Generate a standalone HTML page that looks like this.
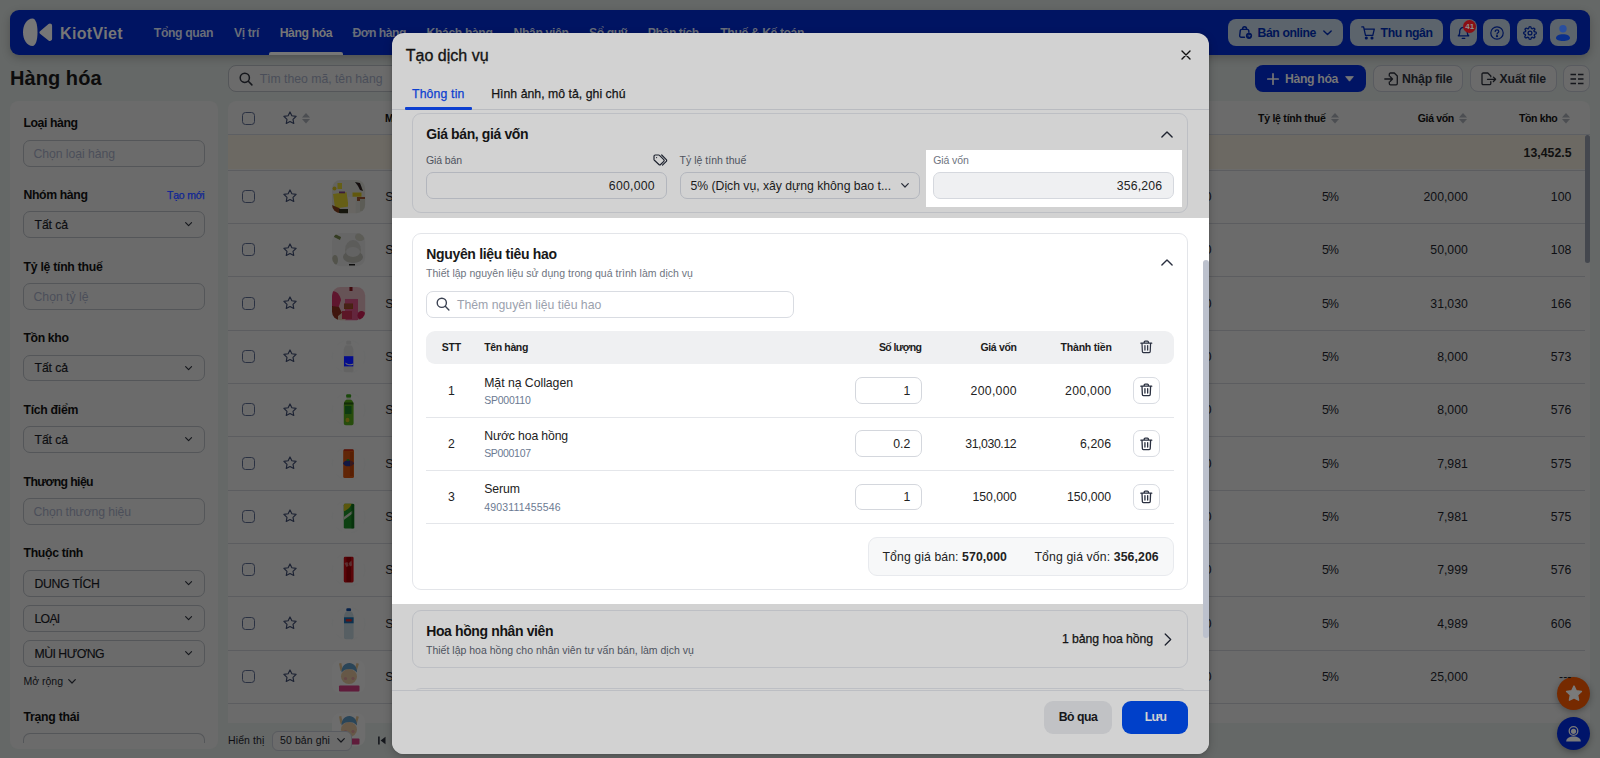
<!DOCTYPE html>
<html lang="vi">
<head>
<meta charset="utf-8">
<title>Hàng hóa - KiotViet</title>
<style>
*{box-sizing:border-box;margin:0;padding:0}
html,body{width:1600px;height:758px;overflow:hidden}
body{background:#656867;font-family:"Liberation Sans",sans-serif;position:relative}
.a{position:absolute}
.t{position:absolute;white-space:nowrap;display:block}
svg{position:absolute;overflow:visible}
/* dimmed page */
.nav{left:10px;top:10px;width:1580px;height:44.6px;background:#001462;border-radius:9px;box-shadow:0 3px 8px rgba(0,0,0,.22)}
.nb{top:19px;height:27px;border-radius:8px;background:#5c646c}
.side{left:10px;top:101.3px;width:208px;height:647.7px;background:#6b6b6b;border-radius:8px}
.inp{left:23px;width:181.5px;height:26.5px;border:1px solid #545659;border-radius:7px}
.tbl{left:228px;top:101.3px;width:1362px;height:621.7px;background:#6b6b6b;border-radius:8px 8px 0 0;overflow:hidden}
.sep{left:228px;width:1357px;height:1px;background:#5c5d60}
.cb{left:241.8px;width:13px;height:13px;border:1.3px solid #2a3142;border-radius:3.5px}
.btn2{top:65px;height:26.5px;border:1px solid #595b60;border-radius:8px;background:#6b6b6b}
/* modal */
.modal{left:391.5px;top:33px;width:817px;height:720.7px;background:#d2d2d2;border-radius:12px;box-shadow:0 3px 10px rgba(0,0,0,.2),0 0 3px rgba(0,0,0,.12);overflow:hidden}
.card{border:1px solid #bdbfc4;border-radius:9px}
.fld{height:26.5px;border:1px solid #b3b6bd;border-radius:7px}
</style>
</head>
<body>
<svg width="0" height="0" style="left:0;top:0"><defs><filter id="bl" x="-10%" y="-10%" width="120%" height="120%"><feGaussianBlur stdDeviation=".55"/></filter></defs></svg>
<div class="a nav"></div>
<svg style="left:22px;top:17px" width="32" height="31" viewBox="0 0 32 31"><path d="M10.500 1.600C4.700 1.600 1 8.200 1 15.300S4.700 29 10.500 29c3.400 0 5-6.300 5-13.700S13.900 1.600 10.500 1.600Z" fill="#767676"/><path d="M18 14.300l8.500-7.200c1.500-1.200 3.600-.2 3.600 1.700v13c0 1.900-2.100 2.900-3.600 1.700L18 16.700c-.8-.7-.8-1.800 0-2.400Z" fill="#767676"/></svg>
<div class="a" style="left:269px;top:52px;width:74px;height:2.6px;background:#767676;border-radius:2px 2px 0 0"></div>
<div class="a nb" style="left:1228px;width:115.4px"></div>
<div class="a nb" style="left:1350px;width:93px"></div>
<div class="a nb" style="left:1450px;width:26.5px"></div>
<div class="a nb" style="left:1483px;width:26.5px"></div>
<div class="a nb" style="left:1516.5px;width:26.5px"></div>
<div class="a nb" style="left:1550px;width:26.5px"></div>
<svg style="left:1238px;top:25px" width="15" height="15" viewBox="0 0 15 15" fill="none" stroke="#001556" stroke-width="1.4" stroke-linecap="round" stroke-linejoin="round"><path d="M6.5 12.300H3.200c-.9 0-1.600-.8-1.500-1.700l.6-5.200c.1-.6.600-1 1.200-1h6c.6 0 1.100.4 1.200 1l.2 1.800"/><path d="M4.600 4.300c0-1.500.9-2.600 2-2.600s2 1.100 2 2.600"/><circle cx="11" cy="10.800" r="3.100" fill="#001556" stroke="none"/><path d="M10 10.800h2M11.300 10l.8.800-.8.800" stroke="#5c646c" stroke-width=".7"/></svg>
<svg style="left:1323px;top:29.5px" width="9" height="6" viewBox="0 0 9 6" fill="none" stroke="#001556" stroke-width="1.4" stroke-linecap="round" stroke-linejoin="round"><path d="M.8 .9l3.700 3.700L8.200 .9"/></svg>
<svg style="left:1361px;top:25.5px" width="15" height="14" viewBox="0 0 15 14" fill="none" stroke="#001556" stroke-width="1.3" stroke-linecap="round" stroke-linejoin="round"><path d="M.8 .9h1.800l1.900 8.400h7.300l1.500-6.200H3.300"/><circle cx="5.300" cy="12" r=".9" fill="#001556"/><circle cx="11" cy="12" r=".9" fill="#001556"/></svg>
<svg style="left:1457px;top:26px" width="13" height="14" viewBox="0 0 13 14" fill="none" stroke="#001556" stroke-width="1.3" stroke-linecap="round" stroke-linejoin="round"><path d="M1.300 9.800c1-.9 1.400-2 1.400-3.400V5.200a3.800 3.800 0 0 1 7.600 0v1.200c0 1.400.4 2.500 1.400 3.400Z"/><path d="M5.300 12.400h2.400"/></svg>
<div class="a" style="left:1463.2px;top:20.300px;width:13.200px;height:13.200px;border-radius:7px;background:#8a0f14"></div>
<svg style="left:1489.5px;top:26px" width="14" height="14" viewBox="0 0 14 14" fill="none" stroke="#001556" stroke-width="1.2" stroke-linecap="round"><circle cx="7" cy="7" r="6.200"/><path d="M5.200 5.500c0-1 .8-1.700 1.800-1.700s1.800.7 1.800 1.600c0 1.300-1.800 1.400-1.800 2.700"/><circle cx="7" cy="10.200" r=".5" fill="#001556"/></svg>
<svg style="left:1523px;top:25.800px" width="14" height="14" viewBox="0 0 24 24" fill="none" stroke="#001556" stroke-width="2.200" stroke-linecap="round" stroke-linejoin="round"><circle cx="12" cy="12" r="3.300"/><path d="M19.400 15a1.650 1.650 0 0 0 .33 1.820l.06.060a2 2 0 1 1-2.830 2.830l-.06-.06a1.650 1.650 0 0 0-1.820-.33 1.650 1.650 0 0 0-1 1.510V21a2 2 0 0 1-4 0v-.09A1.650 1.650 0 0 0 9 19.400a1.650 1.650 0 0 0-1.820.33l-.6.060a2 2 0 1 1-2.830-2.830l.06-.06a1.650 1.650 0 0 0 .33-1.820 1.650 1.650 0 0 0-1.510-1H3a2 2 0 0 1 0-4h.09A1.650 1.650 0 0 0 4.600 9a1.650 1.650 0 0 0-.33-1.820l-.06-.06a2 2 0 1 1 2.830-2.830l.6.060a1.650 1.650 0 0 0 1.820.33H9a1.650 1.650 0 0 0 1-1.510V3a2 2 0 0 1 4 0v.09a1.650 1.650 0 0 0 1 1.510 1.650 1.650 0 0 0 1.820-.33l.06-.06a2 2 0 1 1 2.830 2.830l-.6.060a1.650 1.650 0 0 0-.33 1.820V9a1.650 1.650 0 0 0 1.510 1H21a2 2 0 0 1 0 4h-.09a1.650 1.650 0 0 0-1.510 1z"/></svg>
<svg style="left:1555px;top:23.500px" width="16" height="18" viewBox="0 0 16 18"><circle cx="8" cy="4.800" r="3.700" fill="#2a4f9f"/><path d="M1 14.300c0-2.600 3.100-4 7-4s7 1.400 7 4c0 1.600-3.100 2.700-7 2.700s-7-1.100-7-2.700Z" fill="#0a2f8c"/></svg>
<div class="a" style="left:228px;top:65px;width:400px;height:27px;border:1px solid #545659;border-radius:8px;background:#6b6b6b"></div>
<svg style="left:239px;top:71.500px" width="14" height="14" viewBox="0 0 14 14" fill="none" stroke="#15171c" stroke-width="1.500" stroke-linecap="round"><circle cx="5.800" cy="5.800" r="4.600"/><path d="M9.300 9.300l3.600 3.600"/></svg>
<div class="a" style="left:1255px;top:65px;width:110.500px;height:26.500px;border-radius:8px;background:#001464"></div>
<svg style="left:1267px;top:72.500px" width="12" height="12" viewBox="0 0 12 12" stroke="#767676" stroke-width="1.700" stroke-linecap="round"><path d="M6 .8v10.400M.8 6h10.400"/></svg>
<svg style="left:1345px;top:75.500px" width="9" height="6" viewBox="0 0 9 6"><path d="M.6 .6h7.800L4.500 5.200Z" fill="#767676" stroke="#767676" stroke-width=".8" stroke-linejoin="round"/></svg>
<div class="a btn2" style="left:1372.8px;width:90px"></div>
<div class="a btn2" style="left:1470px;width:86.8px"></div>
<div class="a btn2" style="left:1563.4px;width:26.6px"></div>
<svg style="left:1383.500px;top:71.500px" width="15" height="14" viewBox="0 0 15 14" fill="none" stroke="#14161b" stroke-width="1.300" stroke-linecap="round" stroke-linejoin="round"><path d="M5.300 4V2.200c0-.7.500-1.200 1.200-1.200h3.800l3 3v7.600c0 .7-.5 1.200-1.200 1.200H6.500c-.7 0-1.200-.5-1.200-1.200V10"/><path d="M.8 7h7.600M6.300 4.800L8.500 7 6.300 9.200"/></svg>
<svg style="left:1480.500px;top:71.500px" width="16" height="14" viewBox="0 0 16 14" fill="none" stroke="#14161b" stroke-width="1.300" stroke-linecap="round" stroke-linejoin="round"><path d="M9.800 9.600v1.800c0 .7-.5 1.200-1.200 1.200H2.200c-.7 0-1.200-.5-1.200-1.200V2.200C1 1.500 1.500 1 2.200 1h4.600l3 3v.8"/><path d="M6.500 7.300h8M12.400 5.100l2.200 2.200-2.200 2.200"/></svg>
<svg style="left:1570px;top:72.500px" width="14" height="12" viewBox="0 0 14 12" stroke="#14161b" stroke-width="1.500" stroke-linecap="butt"><path d="M.5 1.500h5.500M8 1.500h5.500M.5 6h5.500M8 6h5.500M.5 10.500h5.500M8 10.500h5.500"/></svg>
<div class="a side"></div>
<div class="a inp" style="top:140px"></div>
<div class="a inp" style="top:211px"></div>
<div class="a inp" style="top:283px"></div>
<div class="a inp" style="top:354.5px"></div>
<div class="a inp" style="top:426px"></div>
<div class="a inp" style="top:498px"></div>
<div class="a inp" style="top:570px"></div>
<div class="a inp" style="top:605px"></div>
<div class="a inp" style="top:640px"></div>
<div class="a inp" style="top:733px;height:10px;border-bottom:none;border-radius:7px 7px 0 0"></div>
<svg style="left:185px;top:222.3px" width="7.200" height="4.500" viewBox="0 0 8 5" fill="none" stroke="#15171c" stroke-width="1.250" stroke-linecap="round" stroke-linejoin="round"><path d="M.7 .7l3.300 3.300L7.300 .7"/></svg>
<svg style="left:185px;top:365.8px" width="7.200" height="4.500" viewBox="0 0 8 5" fill="none" stroke="#15171c" stroke-width="1.250" stroke-linecap="round" stroke-linejoin="round"><path d="M.7 .7l3.300 3.300L7.300 .7"/></svg>
<svg style="left:185px;top:437.3px" width="7.200" height="4.500" viewBox="0 0 8 5" fill="none" stroke="#15171c" stroke-width="1.250" stroke-linecap="round" stroke-linejoin="round"><path d="M.7 .7l3.300 3.300L7.300 .7"/></svg>
<svg style="left:185px;top:580.8px" width="7.200" height="4.500" viewBox="0 0 8 5" fill="none" stroke="#15171c" stroke-width="1.250" stroke-linecap="round" stroke-linejoin="round"><path d="M.7 .7l3.300 3.300L7.300 .7"/></svg>
<svg style="left:185px;top:615.8px" width="7.200" height="4.500" viewBox="0 0 8 5" fill="none" stroke="#15171c" stroke-width="1.250" stroke-linecap="round" stroke-linejoin="round"><path d="M.7 .7l3.300 3.300L7.300 .7"/></svg>
<svg style="left:185px;top:650.8px" width="7.200" height="4.500" viewBox="0 0 8 5" fill="none" stroke="#15171c" stroke-width="1.250" stroke-linecap="round" stroke-linejoin="round"><path d="M.7 .7l3.300 3.300L7.300 .7"/></svg>
<svg style="left:67.500px;top:678.500px" width="8" height="5" viewBox="0 0 8 5" fill="none" stroke="#15171c" stroke-width="1.200" stroke-linecap="round" stroke-linejoin="round"><path d="M.7 .7l3.300 3.300L7.300 .7"/></svg>
<div class="a tbl"></div>
<div class="a" style="left:228px;top:134.300px;width:1357px;height:35.200px;background:#6c6963"></div>
<div class="a" style="left:228px;top:134px;width:1362px;height:1px;background:#5d5f63"></div>
<div class="a sep" style="top:169.7px"></div>
<div class="a sep" style="top:223.0px"></div>
<div class="a sep" style="top:276.3px"></div>
<div class="a sep" style="top:329.7px"></div>
<div class="a sep" style="top:383.0px"></div>
<div class="a sep" style="top:436.3px"></div>
<div class="a sep" style="top:489.7px"></div>
<div class="a sep" style="top:543.0px"></div>
<div class="a sep" style="top:596.3px"></div>
<div class="a sep" style="top:649.7px"></div>
<div class="a sep" style="top:703.0px"></div>
<div class="a cb" style="top:111.800px"></div>
<svg style="left:283px;top:111.0px" width="14" height="14" viewBox="0 0 14 14" fill="none" stroke="#1c2233" stroke-width="1.150" stroke-linejoin="round"><path d="M7 .9l1.850 3.850 4.250.6-3.100 2.950.75 4.200L7 10.500l-3.750 2 .75-4.200L.9 5.350l4.250-.6Z"/></svg>
<svg style="left:301.8px;top:112.9px" width="8" height="10.6" viewBox="0 0 8 10.6"><path d="M4 0L8 4.5H0Z" fill="#4c4e52"/><path d="M4 10.6L8 6.100H0Z" fill="#4c4e52"/></svg>
<svg style="left:1331px;top:112.9px" width="8" height="10.6" viewBox="0 0 8 10.6"><path d="M4 0L8 4.5H0Z" fill="#4c4e52"/><path d="M4 10.6L8 6.100H0Z" fill="#4c4e52"/></svg>
<svg style="left:1459.4px;top:112.9px" width="8" height="10.6" viewBox="0 0 8 10.6"><path d="M4 0L8 4.5H0Z" fill="#4c4e52"/><path d="M4 10.6L8 6.100H0Z" fill="#4c4e52"/></svg>
<svg style="left:1562.2px;top:112.9px" width="8" height="10.6" viewBox="0 0 8 10.6"><path d="M4 0L8 4.5H0Z" fill="#4c4e52"/><path d="M4 10.6L8 6.100H0Z" fill="#4c4e52"/></svg>
<div class="a cb" style="top:189.8px"></div>
<svg style="left:283px;top:189.3px" width="14" height="14" viewBox="0 0 14 14" fill="none" stroke="#1c2233" stroke-width="1.150" stroke-linejoin="round"><path d="M7 .9l1.850 3.850 4.250.6-3.100 2.950.75 4.200L7 10.500l-3.750 2 .75-4.200L.9 5.350l4.250-.6Z"/></svg>
<div class="a cb" style="top:243.2px"></div>
<svg style="left:283px;top:242.7px" width="14" height="14" viewBox="0 0 14 14" fill="none" stroke="#1c2233" stroke-width="1.150" stroke-linejoin="round"><path d="M7 .9l1.850 3.850 4.250.6-3.100 2.950.75 4.200L7 10.500l-3.750 2 .75-4.200L.9 5.350l4.250-.6Z"/></svg>
<div class="a cb" style="top:296.5px"></div>
<svg style="left:283px;top:296.0px" width="14" height="14" viewBox="0 0 14 14" fill="none" stroke="#1c2233" stroke-width="1.150" stroke-linejoin="round"><path d="M7 .9l1.850 3.850 4.250.6-3.100 2.950.75 4.200L7 10.500l-3.750 2 .75-4.200L.9 5.350l4.250-.6Z"/></svg>
<div class="a cb" style="top:349.8px"></div>
<svg style="left:283px;top:349.3px" width="14" height="14" viewBox="0 0 14 14" fill="none" stroke="#1c2233" stroke-width="1.150" stroke-linejoin="round"><path d="M7 .9l1.850 3.850 4.250.6-3.100 2.950.75 4.200L7 10.500l-3.750 2 .75-4.200L.9 5.350l4.250-.6Z"/></svg>
<div class="a cb" style="top:403.2px"></div>
<svg style="left:283px;top:402.7px" width="14" height="14" viewBox="0 0 14 14" fill="none" stroke="#1c2233" stroke-width="1.150" stroke-linejoin="round"><path d="M7 .9l1.850 3.850 4.250.6-3.100 2.950.75 4.200L7 10.500l-3.750 2 .75-4.200L.9 5.350l4.250-.6Z"/></svg>
<div class="a cb" style="top:456.5px"></div>
<svg style="left:283px;top:456.0px" width="14" height="14" viewBox="0 0 14 14" fill="none" stroke="#1c2233" stroke-width="1.150" stroke-linejoin="round"><path d="M7 .9l1.850 3.850 4.250.6-3.100 2.950.75 4.200L7 10.500l-3.750 2 .75-4.200L.9 5.350l4.250-.6Z"/></svg>
<div class="a cb" style="top:509.8px"></div>
<svg style="left:283px;top:509.3px" width="14" height="14" viewBox="0 0 14 14" fill="none" stroke="#1c2233" stroke-width="1.150" stroke-linejoin="round"><path d="M7 .9l1.850 3.850 4.250.6-3.100 2.950.75 4.200L7 10.500l-3.750 2 .75-4.200L.9 5.350l4.250-.6Z"/></svg>
<div class="a cb" style="top:563.2px"></div>
<svg style="left:283px;top:562.7px" width="14" height="14" viewBox="0 0 14 14" fill="none" stroke="#1c2233" stroke-width="1.150" stroke-linejoin="round"><path d="M7 .9l1.850 3.850 4.250.6-3.100 2.950.75 4.200L7 10.500l-3.750 2 .75-4.200L.9 5.350l4.250-.6Z"/></svg>
<div class="a cb" style="top:616.5px"></div>
<svg style="left:283px;top:616.0px" width="14" height="14" viewBox="0 0 14 14" fill="none" stroke="#1c2233" stroke-width="1.150" stroke-linejoin="round"><path d="M7 .9l1.850 3.850 4.250.6-3.100 2.950.75 4.200L7 10.500l-3.750 2 .75-4.200L.9 5.350l4.250-.6Z"/></svg>
<div class="a cb" style="top:669.8px"></div>
<svg style="left:283px;top:669.3px" width="14" height="14" viewBox="0 0 14 14" fill="none" stroke="#1c2233" stroke-width="1.150" stroke-linejoin="round"><path d="M7 .9l1.850 3.850 4.250.6-3.100 2.950.75 4.200L7 10.500l-3.750 2 .75-4.200L.9 5.350l4.250-.6Z"/></svg>
<div class="a" style="left:228px;top:721.7px;width:80px;height:1.3px;overflow:hidden"><div class="a cb" style="left:13.800px;top:1.500px"></div><svg style="left:55px;top:1px" width="14" height="14" viewBox="0 0 14 14" fill="none" stroke="#1c2233" stroke-width="1.150" stroke-linejoin="round"><path d="M7 .9l1.850 3.850 4.250.6-3.100 2.950.75 4.200L7 10.500l-3.750 2 .75-4.200L.9 5.350l4.250-.6Z"/></svg></div>
<svg style="left:331.8px;top:179.8px" width="33.2" height="33.2" viewBox="0 0 33.2 33.2"><defs><clipPath id="c0"><rect width="33.2" height="33.2" rx="8.5"/></clipPath></defs><g clip-path="url(#c0)"><g filter="url(#bl)"><rect width="34" height="34" fill="#646461"/><rect x="2" y="13" width="13.500" height="14.500" transform="rotate(-8 9 20)" fill="#665f12"/><rect x="20.500" y="12.500" width="9" height="4.200" fill="#625911"/><rect x="5.500" y="3" width="4.500" height="6" fill="#655e14"/><circle cx="2.500" cy="8.500" r="2" fill="#61570d"/><path d="M0 25l7 3 8 6H0Z" fill="#3a1f11"/><path d="M7 29h9v5H7Z" fill="#18120e"/><path d="M23 2l5 1 3 8-3-1-2-4Z" fill="#121110"/><rect x="7" y="11.500" width="6" height="1.800" fill="#3a1f3c"/><rect x="16" y="17" width="8" height="17" fill="#676663"/><path d="M25 17h8v4h-8Z" fill="#472614"/><rect x="28" y="19" width="5.200" height="12" fill="#5c5b56"/></g></g></svg>
<svg style="left:331.8px;top:233.2px" width="33.2" height="33.2" viewBox="0 0 33.2 33.2"><defs><clipPath id="c1"><rect width="33.2" height="33.2" rx="8.5"/></clipPath></defs><g clip-path="url(#c1)"><g filter="url(#bl)"><rect width="34" height="34" fill="#666666"/><ellipse cx="21" cy="17" rx="8" ry="10" fill="#5c5c5a"/><ellipse cx="21" cy="24" rx="10" ry="6" fill="#545451"/><ellipse cx="21" cy="19" rx="7" ry="5" fill="#646463"/><path d="M3 1l6 3-1 3-6-3Z" fill="#343c22"/><ellipse cx="3" cy="27" rx="3" ry="5" fill="#52534c"/><rect x="17" y="31" width="6" height="1.500" fill="#0e0e0e"/><ellipse cx="28" cy="4" rx="5" ry="4" fill="#5b5b57"/></g></g></svg>
<svg style="left:331.8px;top:286.5px" width="33.2" height="33.2" viewBox="0 0 33.2 33.2"><defs><clipPath id="c2"><rect width="33.2" height="33.2" rx="8.5"/></clipPath></defs><g clip-path="url(#c2)"><g filter="url(#bl)"><rect width="34" height="34" fill="#665257"/><rect x="13" y="12" width="13" height="22" fill="#64263e"/><rect x="12" y="16.500" width="9" height="5.500" fill="#472212"/><path d="M0 4c5 0 8 4 9 9l-3 9-6 1Z" fill="#5e142d"/><path d="M0 19l7 1 3 6-4 8H0Z" fill="#41120d"/><path d="M6 29l5-4 4 4-2 5H6Z" fill="#65584d"/><ellipse cx="29.500" cy="28.500" rx="4" ry="4.500" fill="#5b0b25"/><rect x="17.500" y="0" width="3" height="4" fill="#410811"/><rect x="10" y="24" width="10" height="8" fill="#5b1828"/></g></g></svg>
<svg style="left:331.8px;top:339.8px" width="33.2" height="33.2" viewBox="0 0 33.2 33.2"><circle cx="16.600" cy="16.600" r="16.300" fill="none" stroke="#68696a" stroke-width=".6" stroke-dasharray="7 9"/><rect x="14.300" y=".8" width="4.800" height="3.600" rx="1" fill="#626262"/><path d="M13.800 5.500c-1.500 1.500-2 3-2 6v19c0 1 .8 1.700 2 1.700h5.600c1.200 0 2-.7 2-1.700v-19c0-3-.5-4.500-2-6Z" fill="#636363"/><rect x="12" y="16.200" width="9.300" height="10.200" fill="#040c8c"/><path d="M13.500 22.500c2 2 5 2.300 7.800 1v1.200c-3 1-6 .5-7.800-1Z" fill="#6d6d6d"/></svg>
<svg style="left:331.8px;top:393.2px" width="33.200" height="33.200" viewBox="0 0 33.2 33.2"><circle cx="16.600" cy="16.600" r="16.300" fill="none" stroke="#68696a" stroke-width=".6" stroke-dasharray="7 9"/><rect x="14.200" y="1.200" width="4.900" height="3.600" rx="1" fill="#1a490b"/><rect x="14.700" y="4.800" width="4" height="2" fill="#5d6258"/><path d="M14.200 6.800c-1.700 1.200-2.400 3-2.400 5.500v18c0 1.200.8 1.900 2 1.900h5.800c1.200 0 2-.7 2-1.900v-18c0-2.500-.7-4.300-2.400-5.500Z" fill="#274d0c"/><rect x="12" y="9.500" width="9.400" height="2" fill="#122d07"/><path d="M13 13h6.500v8H13Z" fill="#0d3a11"/><ellipse cx="15.500" cy="27" rx="2" ry="2.200" fill="#57510d"/></svg>
<svg style="left:331.8px;top:446.5px" width="33.200" height="33.200" viewBox="0 0 33.2 33.2"><circle cx="16.600" cy="16.600" r="16.300" fill="none" stroke="#68696a" stroke-width=".6" stroke-dasharray="7 9"/><rect x="11.200" y="2.400" width="10.800" height="28.600" rx="1.600" fill="#612607"/><rect x="11.800" y="2.400" width="9.600" height="1.300" fill="#570d07"/><ellipse cx="16.500" cy="16.300" rx="5.200" ry="3" fill="#121843"/><ellipse cx="16" cy="13" rx="1.500" ry=".9" fill="#124114"/><rect x="18" y="5" width="3" height="24" fill="#511b03" opacity=".6"/></svg>
<svg style="left:331.8px;top:499.8px" width="33.200" height="33.200" viewBox="0 0 33.2 33.2"><circle cx="16.600" cy="16.600" r="16.300" fill="none" stroke="#68696a" stroke-width=".6" stroke-dasharray="7 9"/><rect x="11.800" y="3.800" width="10.400" height="24.800" rx="1.400" fill="#0d4112"/><path d="M11.800 5c0-.8.600-1.200 1.400-1.200h6.500c-1 3.500-4 6-7.900 7.500Z" fill="#5b570d"/><path d="M11.800 17l8.800-6.500v3l-8.800 6.500Z" fill="#5b6157"/><rect x="19.500" y="4" width="2.700" height="24.400" fill="#042d0a" opacity=".7"/></svg>
<svg style="left:331.8px;top:553.2px" width="33.200" height="33.200" viewBox="0 0 33.2 33.2"><circle cx="16.600" cy="16.600" r="16.300" fill="none" stroke="#68696a" stroke-width=".6" stroke-dasharray="7 9"/><rect x="11.800" y="3.800" width="9.800" height="25.600" rx="1.300" fill="#5b0408"/><rect x="14.500" y="4" width="4.500" height="25" fill="#470003"/><path d="M12.500 10l3-1 1 4-2 1Zm4 .5l3-3 .5 5-2 1Z" fill="#614343" opacity=".7"/></svg>
<svg style="left:331.8px;top:606.5px" width="33.200" height="33.200" viewBox="0 0 33.2 33.2"><circle cx="16.600" cy="16.600" r="16.300" fill="none" stroke="#68696a" stroke-width=".6" stroke-dasharray="7 9"/><rect x="14.300" y="1.300" width="4.800" height="3" rx="1.200" fill="#07224a"/><path d="M14.600 4.300c-1.800 1.700-2.600 3.500-2.600 6v20c0 1.200.8 2 2 2h5.600c1.200 0 2-.8 2-2v-20c0-2.500-.8-4.300-2.600-6Z" fill="#575f63"/><rect x="12" y="10.300" width="9.600" height="6" fill="#0b3251"/><rect x="13.800" y="12" width="6" height="2.600" rx="1" fill="#5e1414"/></svg>
<svg style="left:331.8px;top:659.8px" width="33.2" height="33.2" viewBox="0 0 33.2 33.2"><defs><clipPath id="c9"><rect width="33.2" height="33.2" rx="8.5"/></clipPath></defs><g clip-path="url(#c9)"><g filter="url(#bl)"><rect width="34" height="34" fill="#6d6d6d"/><path d="M7 3.500l2.300-.6 1.500 7-2.300 1Zm17.500-.6l2.400.8-2.300 7.500-2-.8Z" fill="#655741"/><ellipse cx="17" cy="16.500" rx="8" ry="7.500" fill="#665947"/><path d="M9.500 12.500C9.500 6.500 13 3 17.300 3S25 6.500 25 12.500c-2-2.500-4.500-3.500-7.700-3.500s-5.800 1-7.800 3.500Z" fill="#294458"/><circle cx="13.500" cy="18.500" r="1.600" fill="#654747"/><circle cx="21" cy="18.500" r="1.600" fill="#654747"/><rect x="7" y="25.500" width="20.500" height="6" rx="1" fill="#5e1b3a"/></g></g></svg>
<svg style="left:331.8px;top:713.2px" width="33.200" height="9.8" viewBox="0 0 33.2 9.8"><defs><clipPath id="c10"><rect width="33.200" height="33.200" rx="8.500"/></clipPath></defs><g clip-path="url(#c10)"><g filter="url(#bl)"><rect width="34" height="34" fill="#6d6d6d"/><path d="M7 3.500l2.300-.6 1.500 7-2.300 1Zm17.500-.6l2.400.8-2.300 7.500-2-.8Z" fill="#655741"/><ellipse cx="17" cy="16.500" rx="8" ry="7.500" fill="#665947"/><path d="M9.500 12.500C9.500 6.500 13 3 17.300 3S25 6.500 25 12.500c-2-2.500-4.500-3.500-7.700-3.500s-5.800 1-7.800 3.500Z" fill="#294458"/><circle cx="13.500" cy="18.500" r="1.600" fill="#654747"/><circle cx="21" cy="18.500" r="1.600" fill="#654747"/><rect x="7" y="25.500" width="20.500" height="6" rx="1" fill="#5e1b3a"/></g></g></svg>
<div class="a" style="left:1585px;top:135px;width:5px;height:128px;background:#44474e;border-radius:3px"></div>
<div class="a" style="left:272px;top:730.500px;width:80px;height:20px;border:1px solid #595b60;border-radius:6px;background:#6b6b6b"></div>
<svg style="left:336.500px;top:738px" width="8" height="5" viewBox="0 0 8 5" fill="none" stroke="#15171c" stroke-width="1.200" stroke-linecap="round" stroke-linejoin="round"><path d="M.7 .7l3.300 3.300L7.300 .7"/></svg>
<svg style="left:378px;top:735.500px" width="8" height="9" viewBox="0 0 8 9"><path d="M.9 .5v8" stroke="#15171c" stroke-width="1.600"/><path d="M7.500 .7v7.600L2.600 4.500Z" fill="#15171c"/></svg>
<div class="a" style="left:1557px;top:677.2px;width:33px;height:33px;border-radius:17px;background:#762a00;box-shadow:0 2px 6px rgba(0,0,0,.3)"></div>
<svg style="left:1564.500px;top:684.800px" width="18" height="17" viewBox="0 0 14 14"><path d="M7 .9l1.850 3.850 4.250.6-3.100 2.950.75 4.200L7 10.500l-3.750 2 .75-4.200L.9 5.350l4.250-.6Z" fill="#7a7a7a" stroke="#7a7a7a" stroke-width="1.200" stroke-linejoin="round"/></svg>
<div class="a" style="left:1557px;top:717px;width:33px;height:33px;border-radius:17px;background:#00146a;box-shadow:0 2px 6px rgba(0,0,0,.3)"></div>
<svg style="left:1565px;top:724.5px" width="17" height="18" viewBox="0 0 17 18"><circle cx="8.500" cy="6" r="4.300" fill="none" stroke="#7a7a7a" stroke-width="1.300"/><circle cx="8.500" cy="6.300" r="2.600" fill="#7a7a7a"/><path d="M1.200 16.500c0-3.300 3.300-5 7.300-5s7.300 1.700 7.300 5Z" fill="#7a7a7a"/></svg>
<span class="t" style="top:23.64px;height:20.8px;line-height:20.8px;font-size:16px;font-weight:700;color:#767676;letter-spacing:0.355px;left:60px;">KiotViet</span>
<span class="t" style="top:25.74px;height:15.93px;line-height:15.93px;font-size:12.25px;font-weight:700;color:#686d78;letter-spacing:-0.379px;left:153.8px;">Tổng quan</span>
<span class="t" style="top:25.74px;height:15.93px;line-height:15.93px;font-size:12.25px;font-weight:700;color:#686d78;letter-spacing:-0.372px;left:234px;">Vị trí</span>
<span class="t" style="top:25.74px;height:15.93px;line-height:15.93px;font-size:12.25px;font-weight:700;color:#767676;letter-spacing:-0.414px;left:279.7px;">Hàng hóa</span>
<span class="t" style="top:25.74px;height:15.93px;line-height:15.93px;font-size:12.25px;font-weight:700;color:#686d78;letter-spacing:-0.525px;left:352.5px;">Đơn hàng</span>
<span class="t" style="top:25.74px;height:15.93px;line-height:15.93px;font-size:12.25px;font-weight:700;color:#686d78;letter-spacing:-0.411px;left:426.5px;">Khách hàng</span>
<span class="t" style="top:25.74px;height:15.93px;line-height:15.93px;font-size:12.25px;font-weight:700;color:#686d78;letter-spacing:-0.361px;left:513.4px;">Nhân viên</span>
<span class="t" style="top:25.74px;height:15.93px;line-height:15.93px;font-size:12.25px;font-weight:700;color:#686d78;letter-spacing:-0.474px;left:589px;">Sổ quỹ</span>
<span class="t" style="top:25.74px;height:15.93px;line-height:15.93px;font-size:12.25px;font-weight:700;color:#686d78;letter-spacing:-0.460px;left:647.8px;">Phân tích</span>
<span class="t" style="top:25.74px;height:15.93px;line-height:15.93px;font-size:12.25px;font-weight:700;color:#686d78;letter-spacing:-0.439px;left:720.3px;">Thuế &amp; Kế toán</span>
<span class="t" style="top:25.74px;height:15.93px;line-height:15.93px;font-size:12.25px;font-weight:700;color:#001556;letter-spacing:-0.412px;left:1257.5px;">Bán online</span>
<span class="t" style="top:25.74px;height:15.93px;line-height:15.93px;font-size:12.25px;font-weight:700;color:#001556;letter-spacing:-0.391px;left:1380.6px;">Thu ngân</span>
<span class="t" style="top:22.32px;height:10.4px;line-height:10.4px;font-size:8px;font-weight:700;color:#8f8f8f;left:1469.8px;transform:translateX(-50%);">41</span>
<span class="t" style="top:64.9px;height:26.0px;line-height:26.0px;font-size:20px;font-weight:700;color:#0c0c0c;letter-spacing:0.059px;left:10px;">Hàng hóa</span>
<span class="t" style="top:71.74px;height:15.93px;line-height:15.93px;font-size:12.25px;font-weight:400;color:#4a4e59;letter-spacing:-0.021px;left:259.7px;">Tìm theo mã, tên hàng</span>
<span class="t" style="top:71.94px;height:15.93px;line-height:15.93px;font-size:12.25px;font-weight:700;color:#767676;letter-spacing:-0.352px;left:1285px;">Hàng hóa</span>
<span class="t" style="top:71.94px;height:15.93px;line-height:15.93px;font-size:12.25px;font-weight:700;color:#14161b;letter-spacing:-0.137px;left:1402px;">Nhập file</span>
<span class="t" style="top:71.94px;height:15.93px;line-height:15.93px;font-size:12.25px;font-weight:700;color:#14161b;letter-spacing:-0.128px;left:1499.5px;">Xuất file</span>
<span class="t" style="top:116.44px;height:15.93px;line-height:15.93px;font-size:12.25px;font-weight:700;color:#080808;letter-spacing:-0.429px;left:23.5px;">Loại hàng</span>
<span class="t" style="top:146.74px;height:15.93px;line-height:15.93px;font-size:12.25px;font-weight:400;color:#4b4f5a;letter-spacing:-0.066px;left:33.5px;">Chọn loại hàng</span>
<span class="t" style="top:188.44px;height:15.93px;line-height:15.93px;font-size:12.25px;font-weight:700;color:#080808;letter-spacing:-0.375px;left:23.5px;">Nhóm hàng</span>
<span class="t" style="top:189.38px;height:13.65px;line-height:13.65px;font-size:10.5px;font-weight:400;color:#0f2596;letter-spacing:-0.212px;left:167px;-webkit-text-stroke:.25px #0f2596;">Tạo mới</span>
<span class="t" style="top:218.14px;height:15.93px;line-height:15.93px;font-size:12.25px;font-weight:400;color:#0c0d10;letter-spacing:-0.091px;left:34.5px;-webkit-text-stroke:.15px #0c0d10;">Tất cả</span>
<span class="t" style="top:259.74px;height:15.93px;line-height:15.93px;font-size:12.25px;font-weight:700;color:#080808;letter-spacing:-0.269px;left:23.5px;">Tỷ lệ tính thuế</span>
<span class="t" style="top:289.74px;height:15.93px;line-height:15.93px;font-size:12.25px;font-weight:400;color:#4b4f5a;letter-spacing:-0.016px;left:33.5px;">Chọn tỷ lệ</span>
<span class="t" style="top:331.44px;height:15.93px;line-height:15.93px;font-size:12.25px;font-weight:700;color:#080808;letter-spacing:-0.377px;left:23.5px;">Tồn kho</span>
<span class="t" style="top:361.24px;height:15.93px;line-height:15.93px;font-size:12.25px;font-weight:400;color:#0c0d10;letter-spacing:-0.091px;left:34.5px;-webkit-text-stroke:.15px #0c0d10;">Tất cả</span>
<span class="t" style="top:403.14px;height:15.93px;line-height:15.93px;font-size:12.25px;font-weight:700;color:#080808;letter-spacing:-0.299px;left:23.5px;">Tích điểm</span>
<span class="t" style="top:432.94px;height:15.93px;line-height:15.93px;font-size:12.25px;font-weight:400;color:#0c0d10;letter-spacing:-0.091px;left:34.5px;-webkit-text-stroke:.15px #0c0d10;">Tất cả</span>
<span class="t" style="top:474.74px;height:15.93px;line-height:15.93px;font-size:12.25px;font-weight:700;color:#080808;letter-spacing:-0.601px;left:23.5px;">Thương hiệu</span>
<span class="t" style="top:504.74px;height:15.93px;line-height:15.93px;font-size:12.25px;font-weight:400;color:#4b4f5a;letter-spacing:-0.114px;left:33.5px;">Chọn thương hiệu</span>
<span class="t" style="top:546.44px;height:15.93px;line-height:15.93px;font-size:12.25px;font-weight:700;color:#080808;letter-spacing:-0.311px;left:23.5px;">Thuộc tính</span>
<span class="t" style="top:576.74px;height:15.93px;line-height:15.93px;font-size:12.25px;font-weight:400;color:#0c0d10;letter-spacing:-0.316px;left:34.5px;-webkit-text-stroke:.15px #0c0d10;">DUNG TÍCH</span>
<span class="t" style="top:611.74px;height:15.93px;line-height:15.93px;font-size:12.25px;font-weight:400;color:#0c0d10;letter-spacing:-0.730px;left:34.5px;-webkit-text-stroke:.15px #0c0d10;">LOẠI</span>
<span class="t" style="top:646.74px;height:15.93px;line-height:15.93px;font-size:12.25px;font-weight:400;color:#0c0d10;letter-spacing:-0.505px;left:34.5px;-webkit-text-stroke:.15px #0c0d10;">MÙI HƯƠNG</span>
<span class="t" style="top:675.38px;height:13.65px;line-height:13.65px;font-size:10.5px;font-weight:400;color:#0e0f13;letter-spacing:-0.011px;left:23.5px;">Mở rộng</span>
<span class="t" style="top:710.24px;height:15.93px;line-height:15.93px;font-size:12.25px;font-weight:700;color:#080808;letter-spacing:-0.255px;left:23.5px;">Trạng thái</span>
<span class="t" style="top:112.38px;height:13.65px;line-height:13.65px;font-size:10.5px;font-weight:700;color:#080808;left:385px;">Mã hàng</span>
<span class="t" style="top:112.38px;height:13.65px;line-height:13.65px;font-size:10.5px;font-weight:700;color:#080808;letter-spacing:-0.245px;left:1258px;">Tỷ lệ tính thuế</span>
<span class="t" style="top:112.38px;height:13.65px;line-height:13.65px;font-size:10.5px;font-weight:700;color:#080808;letter-spacing:-0.359px;left:1417.8px;">Giá vốn</span>
<span class="t" style="top:112.38px;height:13.65px;line-height:13.65px;font-size:10.5px;font-weight:700;color:#080808;letter-spacing:-0.361px;left:1519px;">Tồn kho</span>
<span class="t" style="top:145.74px;height:15.93px;line-height:15.93px;font-size:12.25px;font-weight:700;color:#101010;letter-spacing:0.039px;right:28.5px;margin-right:-0.039px;">13,452.5</span>
<span class="t" style="top:189.88px;height:15.93px;line-height:15.93px;font-size:12.25px;font-weight:400;color:#0e0f13;left:385.3px;">SP000110</span>
<span class="t" style="top:189.88px;height:15.93px;line-height:15.93px;font-size:12.25px;font-weight:400;color:#0e0f13;right:388.5px;">350,000</span>
<span class="t" style="top:189.88px;height:15.93px;line-height:15.93px;font-size:12.25px;font-weight:400;color:#0e0f13;letter-spacing:-0.800px;right:261px;margin-right:0.800px;">5%</span>
<span class="t" style="top:189.88px;height:15.93px;line-height:15.93px;font-size:12.25px;font-weight:400;color:#0e0f13;right:132.2px;">200,000</span>
<span class="t" style="top:189.88px;height:15.93px;line-height:15.93px;font-size:12.25px;font-weight:400;color:#0e0f13;right:28.7px;">100</span>
<span class="t" style="top:243.21px;height:15.93px;line-height:15.93px;font-size:12.25px;font-weight:400;color:#0e0f13;left:385.3px;">SP000109</span>
<span class="t" style="top:243.21px;height:15.93px;line-height:15.93px;font-size:12.25px;font-weight:400;color:#0e0f13;right:388.5px;">120,000</span>
<span class="t" style="top:243.21px;height:15.93px;line-height:15.93px;font-size:12.25px;font-weight:400;color:#0e0f13;letter-spacing:-0.800px;right:261px;margin-right:0.800px;">5%</span>
<span class="t" style="top:243.21px;height:15.93px;line-height:15.93px;font-size:12.25px;font-weight:400;color:#0e0f13;right:132.2px;">50,000</span>
<span class="t" style="top:243.21px;height:15.93px;line-height:15.93px;font-size:12.25px;font-weight:400;color:#0e0f13;right:28.7px;">108</span>
<span class="t" style="top:296.55px;height:15.93px;line-height:15.93px;font-size:12.25px;font-weight:400;color:#0e0f13;left:385.3px;">SP000107</span>
<span class="t" style="top:296.55px;height:15.93px;line-height:15.93px;font-size:12.25px;font-weight:400;color:#0e0f13;right:388.5px;">65,000</span>
<span class="t" style="top:296.55px;height:15.93px;line-height:15.93px;font-size:12.25px;font-weight:400;color:#0e0f13;letter-spacing:-0.800px;right:261px;margin-right:0.800px;">5%</span>
<span class="t" style="top:296.55px;height:15.93px;line-height:15.93px;font-size:12.25px;font-weight:400;color:#0e0f13;right:132.2px;">31,030</span>
<span class="t" style="top:296.55px;height:15.93px;line-height:15.93px;font-size:12.25px;font-weight:400;color:#0e0f13;right:28.7px;">166</span>
<span class="t" style="top:349.88px;height:15.93px;line-height:15.93px;font-size:12.25px;font-weight:400;color:#0e0f13;left:385.3px;">SP000106</span>
<span class="t" style="top:349.88px;height:15.93px;line-height:15.93px;font-size:12.25px;font-weight:400;color:#0e0f13;right:388.5px;">12,000</span>
<span class="t" style="top:349.88px;height:15.93px;line-height:15.93px;font-size:12.25px;font-weight:400;color:#0e0f13;letter-spacing:-0.800px;right:261px;margin-right:0.800px;">5%</span>
<span class="t" style="top:349.88px;height:15.93px;line-height:15.93px;font-size:12.25px;font-weight:400;color:#0e0f13;right:132.2px;">8,000</span>
<span class="t" style="top:349.88px;height:15.93px;line-height:15.93px;font-size:12.25px;font-weight:400;color:#0e0f13;right:28.7px;">573</span>
<span class="t" style="top:403.21px;height:15.93px;line-height:15.93px;font-size:12.25px;font-weight:400;color:#0e0f13;left:385.3px;">SP000105</span>
<span class="t" style="top:403.21px;height:15.93px;line-height:15.93px;font-size:12.25px;font-weight:400;color:#0e0f13;right:388.5px;">12,000</span>
<span class="t" style="top:403.21px;height:15.93px;line-height:15.93px;font-size:12.25px;font-weight:400;color:#0e0f13;letter-spacing:-0.800px;right:261px;margin-right:0.800px;">5%</span>
<span class="t" style="top:403.21px;height:15.93px;line-height:15.93px;font-size:12.25px;font-weight:400;color:#0e0f13;right:132.2px;">8,000</span>
<span class="t" style="top:403.21px;height:15.93px;line-height:15.93px;font-size:12.25px;font-weight:400;color:#0e0f13;right:28.7px;">576</span>
<span class="t" style="top:456.55px;height:15.93px;line-height:15.93px;font-size:12.25px;font-weight:400;color:#0e0f13;left:385.3px;">SP000104</span>
<span class="t" style="top:456.55px;height:15.93px;line-height:15.93px;font-size:12.25px;font-weight:400;color:#0e0f13;right:388.5px;">10,000</span>
<span class="t" style="top:456.55px;height:15.93px;line-height:15.93px;font-size:12.25px;font-weight:400;color:#0e0f13;letter-spacing:-0.800px;right:261px;margin-right:0.800px;">5%</span>
<span class="t" style="top:456.55px;height:15.93px;line-height:15.93px;font-size:12.25px;font-weight:400;color:#0e0f13;right:132.2px;">7,981</span>
<span class="t" style="top:456.55px;height:15.93px;line-height:15.93px;font-size:12.25px;font-weight:400;color:#0e0f13;right:28.7px;">575</span>
<span class="t" style="top:509.88px;height:15.93px;line-height:15.93px;font-size:12.25px;font-weight:400;color:#0e0f13;left:385.3px;">SP000103</span>
<span class="t" style="top:509.88px;height:15.93px;line-height:15.93px;font-size:12.25px;font-weight:400;color:#0e0f13;right:388.5px;">10,000</span>
<span class="t" style="top:509.88px;height:15.93px;line-height:15.93px;font-size:12.25px;font-weight:400;color:#0e0f13;letter-spacing:-0.800px;right:261px;margin-right:0.800px;">5%</span>
<span class="t" style="top:509.88px;height:15.93px;line-height:15.93px;font-size:12.25px;font-weight:400;color:#0e0f13;right:132.2px;">7,981</span>
<span class="t" style="top:509.88px;height:15.93px;line-height:15.93px;font-size:12.25px;font-weight:400;color:#0e0f13;right:28.7px;">575</span>
<span class="t" style="top:563.21px;height:15.93px;line-height:15.93px;font-size:12.25px;font-weight:400;color:#0e0f13;left:385.3px;">SP000102</span>
<span class="t" style="top:563.21px;height:15.93px;line-height:15.93px;font-size:12.25px;font-weight:400;color:#0e0f13;right:388.5px;">10,000</span>
<span class="t" style="top:563.21px;height:15.93px;line-height:15.93px;font-size:12.25px;font-weight:400;color:#0e0f13;letter-spacing:-0.800px;right:261px;margin-right:0.800px;">5%</span>
<span class="t" style="top:563.21px;height:15.93px;line-height:15.93px;font-size:12.25px;font-weight:400;color:#0e0f13;right:132.2px;">7,999</span>
<span class="t" style="top:563.21px;height:15.93px;line-height:15.93px;font-size:12.25px;font-weight:400;color:#0e0f13;right:28.7px;">576</span>
<span class="t" style="top:616.54px;height:15.93px;line-height:15.93px;font-size:12.25px;font-weight:400;color:#0e0f13;left:385.3px;">SP000101</span>
<span class="t" style="top:616.54px;height:15.93px;line-height:15.93px;font-size:12.25px;font-weight:400;color:#0e0f13;right:388.5px;">6,000</span>
<span class="t" style="top:616.54px;height:15.93px;line-height:15.93px;font-size:12.25px;font-weight:400;color:#0e0f13;letter-spacing:-0.800px;right:261px;margin-right:0.800px;">5%</span>
<span class="t" style="top:616.54px;height:15.93px;line-height:15.93px;font-size:12.25px;font-weight:400;color:#0e0f13;right:132.2px;">4,989</span>
<span class="t" style="top:616.54px;height:15.93px;line-height:15.93px;font-size:12.25px;font-weight:400;color:#0e0f13;right:28.7px;">606</span>
<span class="t" style="top:669.88px;height:15.93px;line-height:15.93px;font-size:12.25px;font-weight:400;color:#0e0f13;left:385.3px;">SP000100</span>
<span class="t" style="top:669.88px;height:15.93px;line-height:15.93px;font-size:12.25px;font-weight:400;color:#0e0f13;right:388.5px;">45,000</span>
<span class="t" style="top:669.88px;height:15.93px;line-height:15.93px;font-size:12.25px;font-weight:400;color:#0e0f13;letter-spacing:-0.800px;right:261px;margin-right:0.800px;">5%</span>
<span class="t" style="top:669.88px;height:15.93px;line-height:15.93px;font-size:12.25px;font-weight:400;color:#0e0f13;right:132.2px;">25,000</span>
<span class="t" style="top:669.88px;height:15.93px;line-height:15.93px;font-size:12.25px;font-weight:400;color:#0e0f13;right:28.7px;">---</span>
<span class="t" style="top:734.08px;height:13.65px;line-height:13.65px;font-size:10.5px;font-weight:400;color:#0e0f13;letter-spacing:0.111px;left:228px;">Hiển thị</span>
<span class="t" style="top:734.08px;height:13.65px;line-height:13.65px;font-size:10.5px;font-weight:400;color:#0e0f13;letter-spacing:0.095px;left:280px;">50 bản ghi</span>
<div class="a modal">
<div class="a" style="left:-391.5px;top:-33px;width:1600px;height:758px">
<div class="a" style="left:391.5px;top:217.7px;width:817px;height:386.300px;background:#fff"></div>
<div class="a" style="left:925.800px;top:149.800px;width:256.700px;height:57.400px;background:#fff"></div>
<div class="a" style="left:391.5px;top:108.800px;width:817px;height:1px;background:#b9bbc0"></div>
<div class="a" style="left:405px;top:107.300px;width:66.500px;height:2.300px;background:#0d3fd0;border-radius:1px"></div>
<svg style="left:1180.900px;top:50px" width="10" height="10" viewBox="0 0 10 10" stroke="#111" stroke-width="1.400" stroke-linecap="round"><path d="M1 1l8 8M9 1l-8 8"/></svg>
<div class="a card" style="left:412px;top:113px;width:775.500px;height:99.500px"></div>
<div class="a card" style="left:412px;top:233px;width:775.500px;height:357px;border-color:#e3e5e9"></div>
<div class="a card" style="left:412px;top:610px;width:775.500px;height:57.500px"></div>
<div class="a card" style="left:412px;top:688px;width:775.500px;height:30px"></div>
<div class="a" style="left:391.5px;top:690.300px;width:817px;height:64px;background:#d2d2d2;border-top:1px solid #bcbec3"></div>
<div class="a" style="left:1044px;top:700.500px;width:67.800px;height:33.300px;border-radius:9px;background:#c1c2c5"></div>
<div class="a" style="left:1121.700px;top:700.500px;width:66.500px;height:33.300px;border-radius:9px;background:#0040c9"></div>
<div class="a fld" style="left:426px;top:172px;width:240.500px"></div>
<div class="a fld" style="left:679.500px;top:172px;width:240.500px"></div>
<div class="a fld" style="left:933px;top:172px;width:240.500px;background:#eff0f2;border-color:#d5d8de"></div>
<svg style="left:652.900px;top:154.400px" width="15" height="13" viewBox="0 0 15 13" fill="none" stroke="#1f2430" stroke-width="1.200" stroke-linejoin="round" stroke-linecap="round"><path d="M1 2.200C1 1.500 1.500 1 2.200 1h3.500c.3 0 .6.100.8.300l4.300 4.300c.5.500.5 1.200 0 1.700l-3.200 3.200c-.5.500-1.200.5-1.700 0L1.400 6.200c-.2-.2-.4-.5-.4-.8Z"/><path d="M8.700 1l4.600 4.600c.5.500.5 1.200 0 1.700L9.500 11.100"/><circle cx="3.600" cy="3.600" r=".6" fill="#1f2430" stroke="none"/></svg>
<svg style="left:900.500px;top:183px" width="8" height="5" viewBox="0 0 8 5" fill="none" stroke="#2a2f3a" stroke-width="1.200" stroke-linecap="round" stroke-linejoin="round"><path d="M.7 .7l3.300 3.300L7.300 .7"/></svg>
<svg style="left:1161px;top:130.5px" width="12" height="7" viewBox="0 0 12 7" fill="none" stroke="#1f2430" stroke-width="1.400" stroke-linecap="round" stroke-linejoin="round"><path d="M.9 6l5.100-5 5.100 5"/></svg>
<svg style="left:1161px;top:258.5px" width="12" height="7" viewBox="0 0 12 7" fill="none" stroke="#2a3040" stroke-width="1.400" stroke-linecap="round" stroke-linejoin="round"><path d="M.9 6l5.100-5 5.100 5"/></svg>
<div class="a fld" style="left:426px;top:291px;width:367.500px;border-color:#d9dce2"></div>
<svg style="left:436px;top:297px" width="14" height="14" viewBox="0 0 14 14" fill="none" stroke="#3b4252" stroke-width="1.400" stroke-linecap="round"><circle cx="5.800" cy="5.800" r="4.600"/><path d="M9.300 9.300l3.600 3.600"/></svg>
<div class="a" style="left:426px;top:330.600px;width:747.500px;height:33.100px;background:#eff0f2;border-radius:9px"></div>
<svg style="left:1140.300px;top:340.200px" width="12.600" height="13.700" viewBox="0 0 12 13" fill="none" stroke="#2a3040" stroke-width="1.150" stroke-linecap="round" stroke-linejoin="round"><path d="M.8 3h10.400M4 3V1.900c0-.6.400-.9.900-.9h2.200c.5 0 .9.300.9.900V3M1.900 3l.35 8c0 .6.450 1 1 1h5.500c.55 0 1-.4 1-1l.35-8M4.700 5.300v4.300M7.300 5.300v4.300"/></svg>
<div class="a" style="left:426px;top:417px;width:747.500px;height:1px;background:#e4e6ea"></div>
<div class="a" style="left:426px;top:470px;width:747.500px;height:1px;background:#e4e6ea"></div>
<div class="a" style="left:426px;top:523px;width:747.500px;height:1px;background:#e4e6ea"></div>
<div class="a fld" style="left:855px;top:377.1px;width:66.500px;border-color:#d4d7dd;background:#fff"></div>
<div class="a fld" style="left:1132.500px;top:377.1px;width:27px;border-color:#d9dce2;background:#fff"></div>
<svg style="left:1139.800px;top:383.4px" width="12.600" height="13.700" viewBox="0 0 12 13" fill="none" stroke="#2a3040" stroke-width="1.250" stroke-linecap="round" stroke-linejoin="round"><path d="M.8 3h10.400M4 3V1.900c0-.6.400-.9.900-.9h2.200c.5 0 .9.300.9.900V3M1.900 3l.35 8c0 .6.450 1 1 1h5.500c.55 0 1-.4 1-1l.35-8M4.700 5.300v4.300M7.300 5.300v4.300"/></svg>
<div class="a fld" style="left:855px;top:430.4px;width:66.500px;border-color:#d4d7dd;background:#fff"></div>
<div class="a fld" style="left:1132.500px;top:430.4px;width:27px;border-color:#d9dce2;background:#fff"></div>
<svg style="left:1139.800px;top:436.7px" width="12.600" height="13.700" viewBox="0 0 12 13" fill="none" stroke="#2a3040" stroke-width="1.250" stroke-linecap="round" stroke-linejoin="round"><path d="M.8 3h10.400M4 3V1.900c0-.6.400-.9.900-.9h2.200c.5 0 .9.300.9.900V3M1.900 3l.35 8c0 .6.450 1 1 1h5.500c.55 0 1-.4 1-1l.35-8M4.700 5.300v4.300M7.300 5.300v4.300"/></svg>
<div class="a fld" style="left:855px;top:483.7px;width:66.500px;border-color:#d4d7dd;background:#fff"></div>
<div class="a fld" style="left:1132.500px;top:483.7px;width:27px;border-color:#d9dce2;background:#fff"></div>
<svg style="left:1139.800px;top:490.0px" width="12.600" height="13.700" viewBox="0 0 12 13" fill="none" stroke="#2a3040" stroke-width="1.250" stroke-linecap="round" stroke-linejoin="round"><path d="M.8 3h10.400M4 3V1.900c0-.6.400-.9.900-.9h2.200c.5 0 .9.300.9.900V3M1.900 3l.35 8c0 .6.450 1 1 1h5.500c.55 0 1-.4 1-1l.35-8M4.700 5.300v4.300M7.300 5.300v4.300"/></svg>
<div class="a" style="left:867.500px;top:537px;width:306px;height:38.500px;background:#f7f8f9;border:1px solid #e8eaee;border-radius:9px"></div>
<svg style="left:1164px;top:632.500px" width="8" height="13" viewBox="0 0 8 13" fill="none" stroke="#1f2430" stroke-width="1.300" stroke-linecap="round" stroke-linejoin="round"><path d="M1.200 1l5.500 5.500L1.200 12"/></svg>
<div class="a" style="left:1203px;top:260px;width:5.500px;height:378px;background:#bcc1cd;border-radius:3px"></div>
</div></div>
<span class="t" style="top:45.74px;height:20.8px;line-height:20.8px;font-size:16px;font-weight:400;color:#141414;letter-spacing:0.026px;left:405.7px;-webkit-text-stroke:.35px #141414;">Tạo dịch vụ</span>
<span class="t" style="top:86.84px;height:15.93px;line-height:15.93px;font-size:12.25px;font-weight:400;color:#0d3fd0;letter-spacing:0.158px;left:412px;-webkit-text-stroke:.25px #0d3fd0;">Thông tin</span>
<span class="t" style="top:86.84px;height:15.93px;line-height:15.93px;font-size:12.25px;font-weight:400;color:#141414;letter-spacing:0.034px;left:491.2px;-webkit-text-stroke:.25px #141414;">Hình ảnh, mô tả, ghi chú</span>
<span class="t" style="top:124.71px;height:18.2px;line-height:18.2px;font-size:14px;font-weight:700;color:#141414;letter-spacing:-0.384px;left:426.2px;">Giá bán, giá vốn</span>
<span class="t" style="top:154.08px;height:13.65px;line-height:13.65px;font-size:10.5px;font-weight:400;color:#4e535e;letter-spacing:-0.112px;left:426px;">Giá bán</span>
<span class="t" style="top:154.08px;height:13.65px;line-height:13.65px;font-size:10.5px;font-weight:400;color:#4e535e;letter-spacing:0.017px;left:679.5px;">Tỷ lệ tính thuế</span>
<span class="t" style="top:154.08px;height:13.65px;line-height:13.65px;font-size:10.5px;font-weight:400;color:#6e7480;letter-spacing:-0.098px;left:933.2px;">Giá vốn</span>
<span class="t" style="top:178.74px;height:15.93px;line-height:15.93px;font-size:12.25px;font-weight:400;color:#1b1b1b;letter-spacing:0.246px;right:945.4px;margin-right:-0.246px;">600,000</span>
<span class="t" style="top:178.74px;height:15.93px;line-height:15.93px;font-size:12.25px;font-weight:400;color:#1b1b1b;letter-spacing:-0.030px;left:690.5px;">5% (Dịch vụ, xây dựng không bao t...</span>
<span class="t" style="top:178.74px;height:15.93px;line-height:15.93px;font-size:12.25px;font-weight:400;color:#222;letter-spacing:0.146px;right:438px;margin-right:-0.146px;">356,206</span>
<span class="t" style="top:245.11px;height:18.2px;line-height:18.2px;font-size:14px;font-weight:700;color:#181818;letter-spacing:-0.320px;left:426.2px;">Nguyên liệu tiêu hao</span>
<span class="t" style="top:266.88px;height:13.65px;line-height:13.65px;font-size:10.5px;font-weight:400;color:#6e7480;letter-spacing:0.024px;left:426px;">Thiết lập nguyên liệu sử dụng trong quá trình làm dịch vụ</span>
<span class="t" style="top:297.74px;height:15.93px;line-height:15.93px;font-size:12.25px;font-weight:400;color:#9ba1ad;letter-spacing:-0.003px;left:457px;">Thêm nguyên liệu tiêu hao</span>
<span class="t" style="top:341.38px;height:13.65px;line-height:13.65px;font-size:10.5px;font-weight:700;color:#1c1c1c;letter-spacing:-0.281px;left:441.8px;">STT</span>
<span class="t" style="top:341.38px;height:13.65px;line-height:13.65px;font-size:10.5px;font-weight:700;color:#1c1c1c;letter-spacing:-0.359px;left:484.2px;">Tên hàng</span>
<span class="t" style="top:341.38px;height:13.65px;line-height:13.65px;font-size:10.5px;font-weight:700;color:#1c1c1c;letter-spacing:-0.582px;right:678px;margin-right:0.582px;">Số lượng</span>
<span class="t" style="top:341.38px;height:13.65px;line-height:13.65px;font-size:10.5px;font-weight:700;color:#1c1c1c;letter-spacing:-0.317px;right:583px;margin-right:0.317px;">Giá vốn</span>
<span class="t" style="top:341.38px;height:13.65px;line-height:13.65px;font-size:10.5px;font-weight:700;color:#1c1c1c;letter-spacing:-0.209px;right:488.2px;margin-right:0.209px;">Thành tiền</span>
<span class="t" style="top:383.84px;height:15.93px;line-height:15.93px;font-size:12.25px;font-weight:400;color:#222;left:451.5px;transform:translateX(-50%);">1</span>
<span class="t" style="top:375.84px;height:15.93px;line-height:15.93px;font-size:12.25px;font-weight:400;color:#222;letter-spacing:-0.028px;left:484.2px;">Mặt nạ Collagen</span>
<span class="t" style="top:394.08px;height:13.65px;line-height:13.65px;font-size:10.5px;font-weight:400;color:#6b7a92;letter-spacing:-0.246px;left:484.2px;">SP000110</span>
<span class="t" style="top:383.84px;height:15.93px;line-height:15.93px;font-size:12.25px;font-weight:400;color:#222;right:689.8px;">1</span>
<span class="t" style="top:383.84px;height:15.93px;line-height:15.93px;font-size:12.25px;font-weight:400;color:#222;letter-spacing:0.288px;right:583.4px;margin-right:-0.288px;">200,000</span>
<span class="t" style="top:383.84px;height:15.93px;line-height:15.93px;font-size:12.25px;font-weight:400;color:#222;letter-spacing:0.288px;right:488.9px;margin-right:-0.288px;">200,000</span>
<span class="t" style="top:437.14px;height:15.93px;line-height:15.93px;font-size:12.25px;font-weight:400;color:#222;left:451.5px;transform:translateX(-50%);">2</span>
<span class="t" style="top:429.14px;height:15.93px;line-height:15.93px;font-size:12.25px;font-weight:400;color:#222;letter-spacing:-0.146px;left:484.2px;">Nước hoa hồng</span>
<span class="t" style="top:447.38px;height:13.65px;line-height:13.65px;font-size:10.5px;font-weight:400;color:#6b7a92;letter-spacing:-0.318px;left:484.2px;">SP000107</span>
<span class="t" style="top:437.14px;height:15.93px;line-height:15.93px;font-size:12.25px;font-weight:400;color:#222;right:689.8px;">0.2</span>
<span class="t" style="top:437.14px;height:15.93px;line-height:15.93px;font-size:12.25px;font-weight:400;color:#222;letter-spacing:-0.389px;right:583.4px;margin-right:0.389px;">31,030.12</span>
<span class="t" style="top:437.14px;height:15.93px;line-height:15.93px;font-size:12.25px;font-weight:400;color:#222;letter-spacing:0.129px;right:488.9px;margin-right:-0.129px;">6,206</span>
<span class="t" style="top:490.44px;height:15.93px;line-height:15.93px;font-size:12.25px;font-weight:400;color:#222;left:451.5px;transform:translateX(-50%);">3</span>
<span class="t" style="top:482.44px;height:15.93px;line-height:15.93px;font-size:12.25px;font-weight:400;color:#222;letter-spacing:-0.059px;left:484.2px;">Serum</span>
<span class="t" style="top:500.68px;height:13.65px;line-height:13.65px;font-size:10.5px;font-weight:400;color:#6b7a92;letter-spacing:0.165px;left:484.2px;">4903111455546</span>
<span class="t" style="top:490.44px;height:15.93px;line-height:15.93px;font-size:12.25px;font-weight:400;color:#222;right:689.8px;">1</span>
<span class="t" style="top:490.44px;height:15.93px;line-height:15.93px;font-size:12.25px;font-weight:400;color:#222;letter-spacing:-0.040px;right:583.4px;margin-right:0.040px;">150,000</span>
<span class="t" style="top:490.44px;height:15.93px;line-height:15.93px;font-size:12.25px;font-weight:400;color:#222;letter-spacing:-0.040px;right:488.9px;margin-right:0.040px;">150,000</span>
<span class="t" style="top:549.74px;height:15.93px;line-height:15.93px;font-size:12.25px;font-weight:400;color:#222;letter-spacing:0.090px;left:882.5px;">Tổng giá bán: <b>570,000</b></span>
<span class="t" style="top:549.74px;height:15.93px;line-height:15.93px;font-size:12.25px;font-weight:400;color:#222;letter-spacing:0.113px;left:1034.5px;">Tổng giá vốn: <b>356,206</b></span>
<span class="t" style="top:621.61px;height:18.2px;line-height:18.2px;font-size:14px;font-weight:700;color:#141414;letter-spacing:-0.377px;left:426.2px;">Hoa hồng nhân viên</span>
<span class="t" style="top:643.78px;height:13.65px;line-height:13.65px;font-size:10.5px;font-weight:400;color:#4e535e;letter-spacing:0.008px;left:426px;">Thiết lập hoa hồng cho nhân viên tư vấn bán, làm dịch vụ</span>
<span class="t" style="top:632.24px;height:15.93px;line-height:15.93px;font-size:12.25px;font-weight:400;color:#141414;letter-spacing:-0.065px;left:1062px;-webkit-text-stroke:.25px #141414;">1 bảng hoa hồng</span>
<span class="t" style="top:710.44px;height:15.93px;line-height:15.93px;font-size:12.25px;font-weight:700;color:#15161a;letter-spacing:-0.519px;left:1058.8px;">Bỏ qua</span>
<span class="t" style="top:710.44px;height:15.93px;line-height:15.93px;font-size:12.25px;font-weight:700;color:#d2d2d2;letter-spacing:-0.800px;left:1144.8px;">Lưu</span>

</body>
</html>
